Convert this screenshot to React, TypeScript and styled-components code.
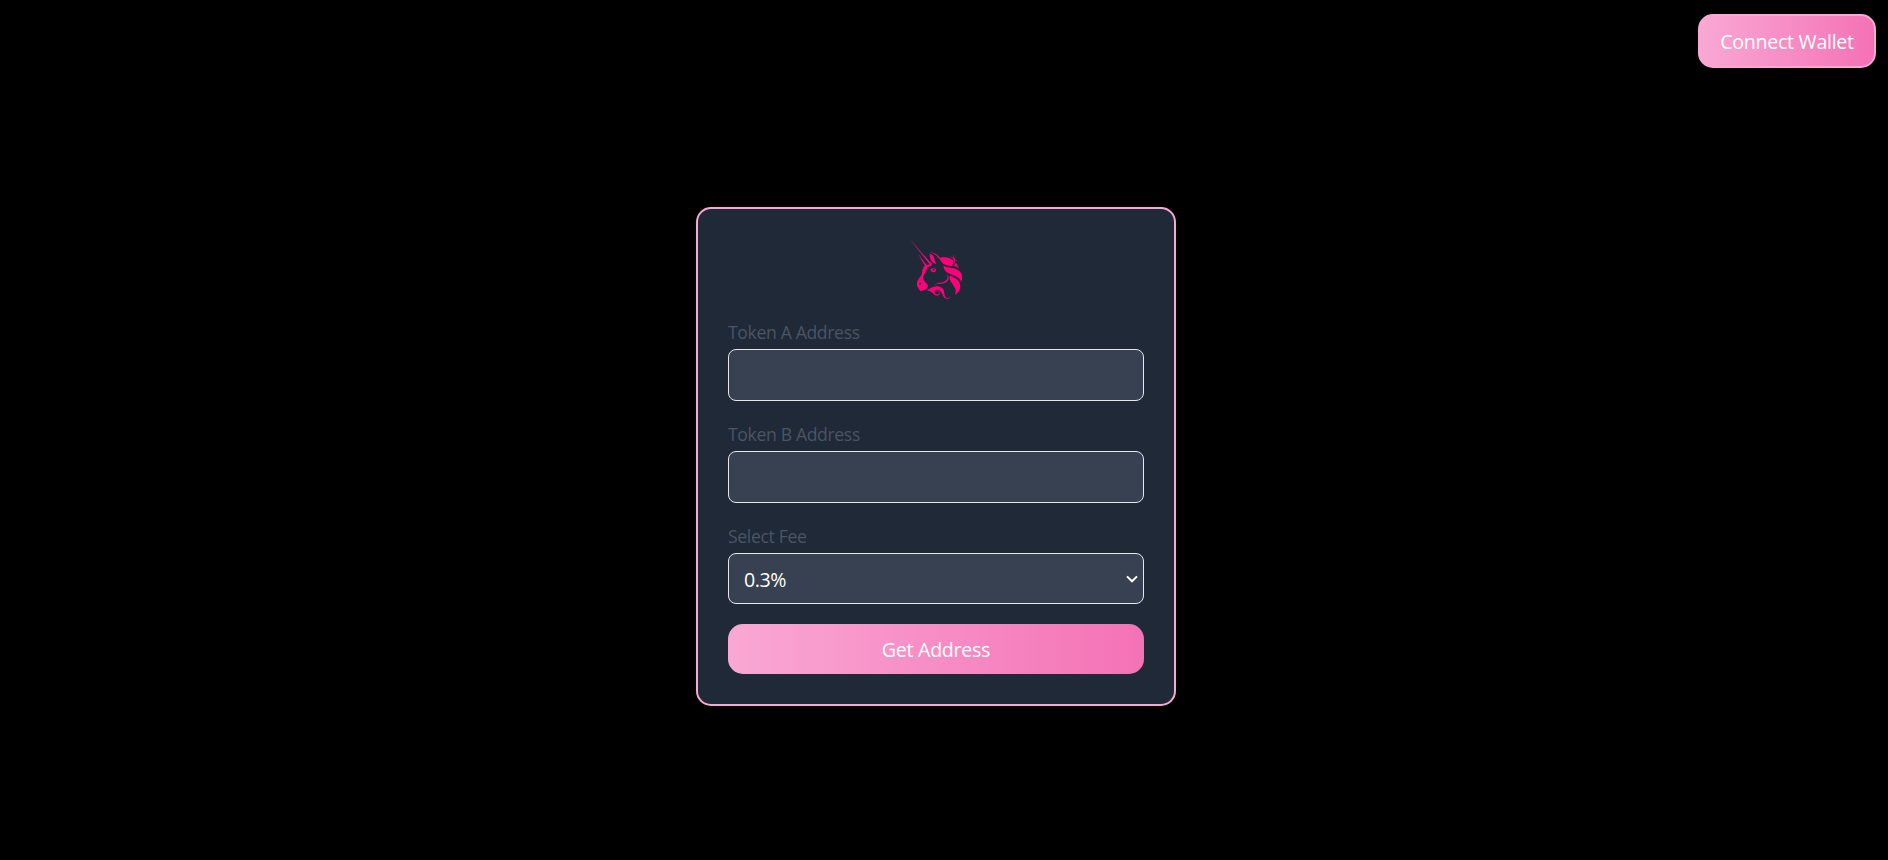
import React from 'react';
import styled, { createGlobalStyle } from 'styled-components';

const GlobalStyle = createGlobalStyle`
  *, *::before, *::after { box-sizing: border-box; }
  body {
    margin: 0;
    background: #000;
    font-family: "Segoe UI", "Open Sans", "Noto Sans", sans-serif;
  }
`;

const Page = styled.div`
  display: flex;
  flex-direction: column;
  min-height: 100vh;
  background: #000;
`;

const TopBar = styled.header`
  display: flex;
  justify-content: flex-end;
  padding: 14px 12px 0 0;
`;

const GradientButton = styled.button<{ $outlined?: boolean }>`
  display: flex;
  align-items: center;
  justify-content: center;
  width: ${(p) => (p.$outlined ? '178px' : '100%')};
  height: ${(p) => (p.$outlined ? '54px' : '50px')};
  padding: 1px 0 0;
  border: ${(p) => (p.$outlined ? '2px solid #f9a8d4' : '0')};
  border-radius: 15px;
  background: linear-gradient(to right, #f9a8d4, #f472b6);
  color: #fff;
  font-family: inherit;
  font-size: 19.6px;
  letter-spacing: -0.28px;
  cursor: pointer;
`;

const Main = styled.main`
  display: flex;
  justify-content: center;
  padding: 139px 16px 0 0;
`;

const Card = styled.form`
  display: flex;
  flex-direction: column;
  width: 480px;
  padding: 30px;
  border: 2px solid #f9a8d4;
  border-radius: 15px;
  background: #1f2937;
`;

const Logo = styled.svg`
  display: block;
  width: 52.1px;
  height: 60px;
  margin: 0 auto 20px;
  fill: #ff007a;
`;

const Field = styled.div`
  display: flex;
  flex-direction: column;
  margin-bottom: 20px;
`;

const Label = styled.label`
  height: 30px;
  color: #4b5563;
  font-size: 17.6px;
  line-height: 25px;
  letter-spacing: -0.35px;
  padding-top: 1px;
`;

const Input = styled.input`
  width: 100%;
  height: 52px;
  padding: 10px 15px;
  border: 1px solid #e5e7eb;
  border-radius: 8px;
  background: #374151;
  color: #fff;
  font-family: inherit;
  font-size: 19.6px;
`;

const SelectWrap = styled.div`
  position: relative;
  display: flex;
`;

const Select = styled.select`
  appearance: none;
  width: 100%;
  height: 51px;
  padding: 2px 15px 0;
  border: 1px solid #e5e7eb;
  border-radius: 8px;
  background: #374151;
  color: #fff;
  font-family: inherit;
  font-size: 19.6px;
  letter-spacing: -0.4px;
`;

const Chevron = styled.svg`
  position: absolute;
  right: 5px;
  top: 21px;
  width: 14px;
  height: 10px;
  fill: none;
  stroke: #fff;
  stroke-width: 2;
  pointer-events: none;
`;

const UnicornLogo = () => (
  <Logo viewBox="0 0 168.3 193.8" aria-label="Unicorn">
    <path d="M66,44.1c-2.1-0.3-2.2-0.4-1.2-0.5c1.9-0.3,6.3,0.1,9.4,0.8c7.2,1.7,13.7,6.1,20.6,13.8l1.8,2.1l2.6-0.4c11.1-1.8,22.5-0.4,32,4c2.6,1.2,6.7,3.6,7.2,4.2c0.2,0.2,0.5,1.5,0.7,2.8c0.7,4.7,0.4,8.2-1.1,10.9c-0.8,1.5-0.8,1.9-0.3,3.2c0.4,1,1.6,1.7,2.7,1.7c2.4,0,4.9-3.8,6.1-9.1l0.5-2.1l0.9,1c5.1,5.7,9.1,13.6,9.7,19.2l0.2,1.5l-0.9-1.3c-1.5-2.3-2.9-3.8-4.8-5.1c-3.4-2.3-7-3-16.5-3.5c-8.6-0.5-13.5-1.2-18.3-2.8c-8.2-2.7-12.4-6.2-22.1-19.1c-4.3-5.7-7-8.8-9.7-11.4C79.6,48.2,73.7,45.2,66,44.1z" />
    <path d="M140.5,56.8c0.2-3.8,0.7-6.3,1.8-8.6c0.4-0.9,0.8-1.7,0.9-1.7c0.1,0-0.1,0.7-0.4,1.5c-0.8,2.2-0.9,5.3-0.4,8.8c0.7,4.5,1,5.1,5.8,10c2.2,2.3,4.8,5.2,5.8,6.4l1.7,2.2l-1.7-1.6c-2.1-2-6.9-5.8-8-6.3c-0.7-0.4-0.8-0.4-1.3,0.1c-0.4,0.4-0.5,1-0.5,3.9c-0.1,4.5-0.7,7.3-2.2,10.2c-0.8,1.5-0.9,1.2-0.2-0.5c0.5-1.3,0.6-1.9,0.6-6.2c0-8.7-1-10.8-7.1-14.3c-1.5-0.9-4.1-2.2-5.6-2.9c-1.6-0.7-2.8-1.3-2.7-1.3c0.2-0.2,6.1,1.5,8.4,2.5c3.5,1.4,4.1,1.5,4.5,1.4C140.1,60.1,140.3,59.3,140.5,56.8z" />
    <path d="M70.1,71.7c-4.2-5.8-6.9-14.8-6.3-21.5l0.2-2.1l1,0.2c1.8,0.3,4.9,1.5,6.4,2.4c4,2.4,5.8,5.7,7.5,13.9c0.5,2.4,1.2,5.2,1.5,6.1c0.5,1.5,2.4,5,4,7.2c1.1,1.6,0.4,2.4-2.1,2.2C78.5,79.8,73.3,76.2,70.1,71.7z" />
    <path d="M135.4,115.2c-19.8-8-26.8-14.9-26.8-26.6c0-1.7,0.1-3.1,0.1-3.1c0.1,0,0.8,0.6,1.7,1.3c4,3.2,8.5,4.6,21,6.4c7.3,1.1,11.5,1.9,15.3,3.2c12.1,4,19.6,12.2,21.4,23.3c0.5,3.2,0.2,9.3-0.6,12.5c-0.7,2.5-2.7,7.1-3.2,7.2c-0.1,0-0.3-0.5-0.3-1.3c-0.2-4.2-2.3-8.2-5.8-11.3C154,123.3,148.6,120.5,135.4,115.2z" />
    <path d="M121.4,118.5c-0.2-1.5-0.7-3.4-1-4.2l-0.5-1.5l0.9,1.1c1.3,1.5,2.3,3.3,3.2,5.8c0.7,1.9,0.7,2.5,0.7,5.6c0,3-0.1,3.7-0.7,5.4c-1,2.7-2.2,4.6-4.2,6.7c-3.6,3.7-8.3,5.7-15,6.6c-1.2,0.1-4.6,0.4-7.6,0.6c-7.5,0.4-12.5,1.2-17,2.8c-0.6,0.2-1.2,0.4-1.3,0.3c-0.2-0.2,2.9-2,5.4-3.2c3.5-1.7,7.1-2.6,15-4c3.9-0.6,7.9-1.4,8.9-1.8C118.1,135.6,122.8,127.9,121.4,118.5z" />
    <path d="M130.5,134.6c-2.6-5.7-3.2-11.1-1.8-16.2c0.2-0.5,0.4-1,0.6-1c0.2,0,0.8,0.3,1.4,0.7c1.2,0.8,3.7,2.2,10.1,5.7c8.1,4.4,12.7,7.8,15.9,11.8c2.8,3.5,4.5,7.4,5.3,12.2c0.5,2.7,0.2,9.2-0.5,11.9c-2.2,8.5-7.2,15.3-14.5,19.2c-1.1,0.6-2,1-2.1,1s0.3-1,0.9-2.2c2.4-5.1,2.7-10,0.9-15.5c-1.1-3.4-3.4-7.5-8-14.4C133.2,139.9,131.9,137.7,130.5,134.6z" />
    <path d="M56,165.2c7.4-6.2,16.5-10.6,24.9-12c3.6-0.6,9.6-0.4,12.9,0.5c5.3,1.4,10.1,4.4,12.6,8c2.4,3.5,3.5,6.6,4.6,13.3c0.4,2.6,0.9,5.3,1,5.9c0.8,3.6,2.4,6.4,4.4,7.9c3.1,2.3,8.5,2.4,13.8,0.4c0.9-0.3,1.7-0.6,1.7-0.5c0.2,0.2-2.5,2-4.3,2.9c-2.5,1.3-4.5,1.7-7.2,1.7c-4.8,0-8.9-2.5-12.2-7.5c-0.7-1-2.1-3.9-3.3-6.6c-3.5-8.1-5.3-10.5-9.4-13.2c-3.6-2.3-8.2-2.8-11.7-1.1c-4.6,2.2-5.8,8.1-2.6,11.7c1.3,1.5,3.7,2.7,5.7,3c3.7,0.5,6.9-2.4,6.9-6.1c0-2.4-0.9-3.8-3.3-4.9c-3.2-1.4-6.7,0.2-6.6,3.3c0,1.3,0.6,2.1,1.9,2.7c0.8,0.4,0.8,0.4,0.2,0.3c-3-0.6-3.7-4.3-1.3-6.7c2.8-2.8,8.7-1.6,10.7,2.3c0.8,1.6,0.9,4.8,0.2,6.8c-1.7,4.4-6.5,6.7-11.4,5.4c-3.3-0.9-4.7-1.8-8.7-5.9c-7-7.2-9.8-8.6-20-10.2l-2-0.3L56,165.2z" />
    <path
      fillRule="evenodd"
      d="M0.5,0C22,27 51,61 69,77.5C71.5,80.5 71,84 69,86.5C67,89 62,89.5 56,91C53,97 54,101 49,109C44,118 40,124 42,131C45,137 55,142 57.5,150C58.5,157 52,163 46,165C41,167 38,168 34,169C30,166 30,161 26.5,158C22,154 21.5,147 22.5,140C24,131 34,124 37.5,115C40,107 39,99 43,92L48,86C42,77 32,60 27,46C35,60 44,73 53,83.5C57,84.5 61,84 63,81C47,61 19,27 0.5,0Z M31,142C34,140 37,141 36,144C35,148 32,149 30,147C28,145 30,143 31,142Z"
    />
    <path
      fillRule="evenodd"
      d="M66.5,97C71,94.5 77,94 82,95.5C84,98 85,101 83,104C79,109 71,108 68,103C66,100 65,98 66.5,97Z M73,97C71,103 80,104 80.5,98Z"
    />
  </Logo>
);

export default function App() {
  return (
    <>
      <GlobalStyle />
      <Page>
        <TopBar>
          <GradientButton type="button" $outlined>Connect Wallet</GradientButton>
        </TopBar>
        <Main>
          <Card>
            <UnicornLogo />
            <Field>
              <Label htmlFor="tokenA">Token A Address</Label>
              <Input id="tokenA" type="text" />
            </Field>
            <Field>
              <Label htmlFor="tokenB">Token B Address</Label>
              <Input id="tokenB" type="text" />
            </Field>
            <Field>
              <Label htmlFor="fee">Select Fee</Label>
              <SelectWrap>
                <Select id="fee" defaultValue="0.3">
                  <option value="0.3">0.3%</option>
                </Select>
                <Chevron viewBox="0 0 14 10">
                  <path d="M2 2.4 L7 7.3 L12 2.4" />
                </Chevron>
              </SelectWrap>
            </Field>
            <GradientButton type="button">Get Address</GradientButton>
          </Card>
        </Main>
      </Page>
    </>
  );
}
